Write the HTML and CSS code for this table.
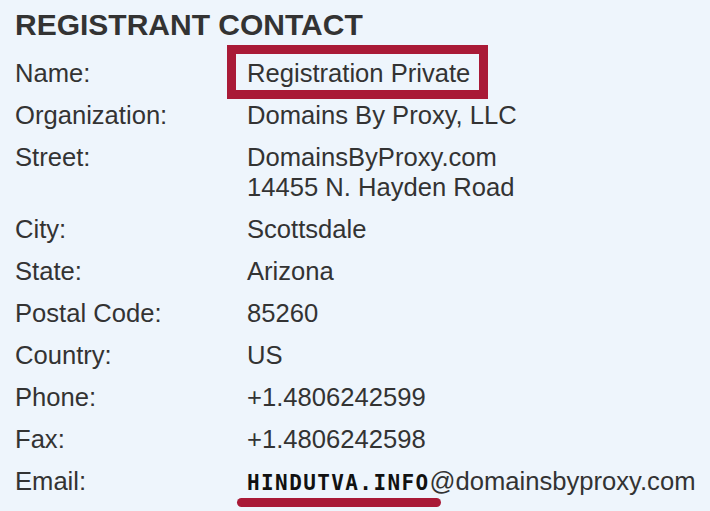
FILE: index.html
```html
<!DOCTYPE html>
<html>
<head>
<meta charset="utf-8">
<link rel="stylesheet" href="styles.css">
</head>
<body>
<div class="panel">
  <h1 class="title">REGISTRANT CONTACT</h1>
  <div class="grid">
    <div class="label">Name:</div>
    <div class="value"><span class="boxed">Registration Private</span></div>
    <div class="label">Organization:</div>
    <div class="value">Domains By Proxy, LLC</div>
    <div class="label">Street:</div>
    <div class="value">DomainsByProxy.com<br>14455 N. Hayden Road</div>
    <div class="label">City:</div>
    <div class="value">Scottsdale</div>
    <div class="label">State:</div>
    <div class="value">Arizona</div>
    <div class="label">Postal Code:</div>
    <div class="value">85260</div>
    <div class="label">Country:</div>
    <div class="value">US</div>
    <div class="label">Phone:</div>
    <div class="value">+1.4806242599</div>
    <div class="label">Fax:</div>
    <div class="value">+1.4806242598</div>
    <div class="label">Email:</div>
    <div class="value nowrap"><span class="pixel">HINDUTVA.INFO</span>@domainsbyproxy.com</div>
  </div>
</div>
</body>
</html>
```
FILE: styles.css
```css
html, body {
  margin: 0;
  padding: 0;
  background: #eef5fc;
}
.panel {
  padding: 10px 16px 10px 15px;
  font-family: "Liberation Sans", Arial, sans-serif;
  color: #333333;
  overflow: hidden;
  height: 491px;
}
.title {
  margin: 0 0 18px 0;
  font-size: 30px;
  line-height: 30px;
  font-weight: bold;
  color: #333333;
}
.grid {
  display: grid;
  grid-template-columns: 232px auto;
  row-gap: 12px;
  font-size: 25.6px;
  line-height: 30px;
}
.nowrap {
  white-space: nowrap;
}
.boxed {
  border: 9px solid #a91a37;
  padding: 5px 9px 3px 11px;
  margin: 0 -20px;
}
.pixel {
  position: relative;
  font-family: "DejaVu Sans Mono", monospace;
  font-weight: bold;
  font-size: 21px;
  letter-spacing: 1.4px;
  color: #111111;
}
.pixel::after {
  content: "";
  position: absolute;
  left: -10px;
  right: -11px;
  bottom: -12px;
  height: 9px;
  border-radius: 5px;
  background: #a91a37;
}
```
